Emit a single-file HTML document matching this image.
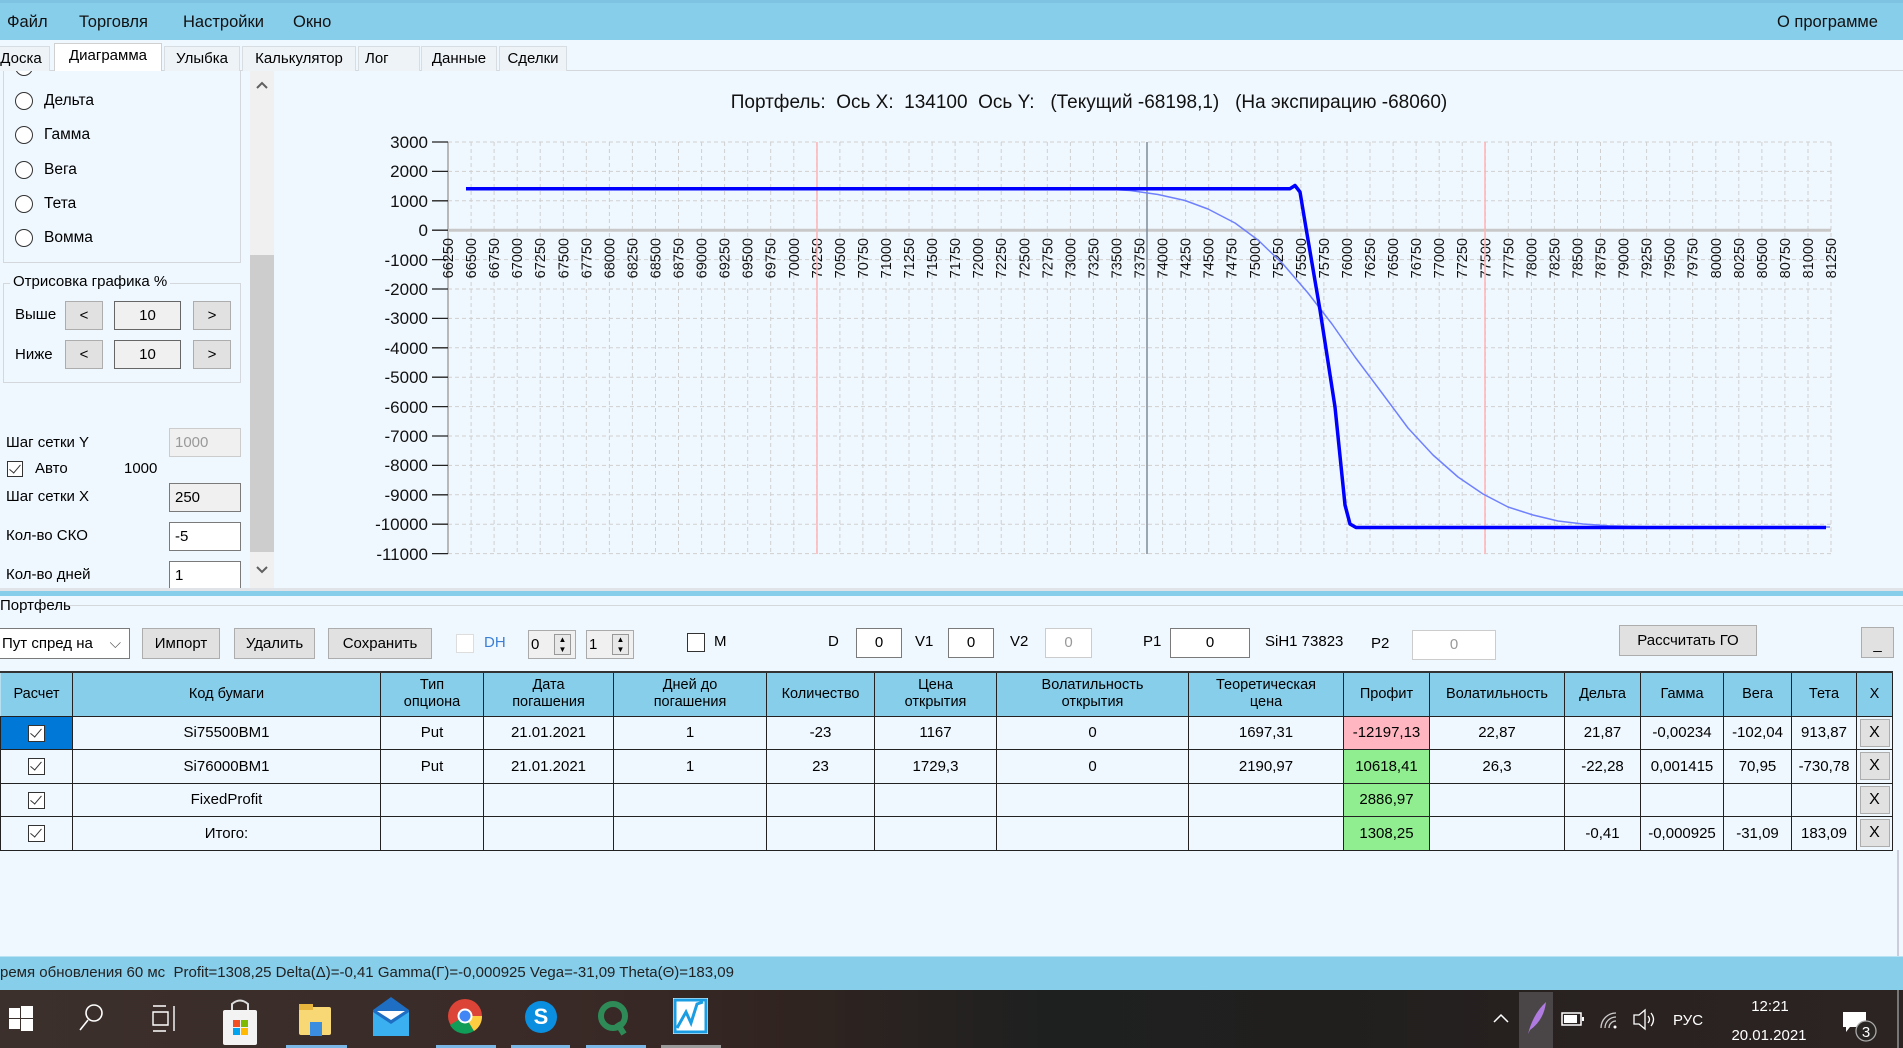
<!DOCTYPE html>
<html><head><meta charset="utf-8">
<style>
*{box-sizing:border-box;margin:0;padding:0}
body{width:1903px;height:1048px;overflow:hidden;background:#f0f8ff;font-family:"Liberation Sans",sans-serif;font-size:15px;color:#000;position:relative}
.a{position:absolute;white-space:nowrap}
.menu{left:0;top:0;width:1903px;height:40px;background:#87ceeb;border-top:3px solid #7ec4e2}
.menu span{position:absolute;top:10px;font-size:16.5px;color:#111}
.tab{position:absolute;top:46px;height:25px;background:#eef3f7;border:1px solid #d8dde2;border-bottom:none;font-size:15px;padding-top:3px;text-align:center}
.btn{position:absolute;background:#e1e1e1;border:1px solid #adadad;text-align:center;font-size:15px}
.tb{position:absolute;background:#fff;border:1px solid #7a7a7a;font-size:15px;padding-left:5px}
.radio{position:absolute;left:15px;width:18px;height:18px;border:1.5px solid #333;border-radius:50%;background:#fff}
.rl{position:absolute;left:44px;font-size:15.5px}
table{position:absolute;left:0;top:671px;border-collapse:collapse;table-layout:fixed;border-top:2px solid #333}
td{border:1px solid #222;height:33.5px;text-align:center;font-size:15px;background:#f0f8ff;padding:0;overflow:hidden;white-space:nowrap}
th{background:#87ceeb;font-weight:normal;font-size:14.5px;height:44px;border:1px solid #222;border-top:none;border-left:1px solid #b6dff0;line-height:17px;padding:0}
.cb{display:inline-block;width:17px;height:17px;border:1px solid #333;background:#fff;position:relative;vertical-align:middle}
.cb:after{content:"";position:absolute;left:4px;top:0px;width:5px;height:10px;border:solid #333;border-width:0 1.5px 1.5px 0;transform:rotate(40deg)}
.xb{display:inline-block;width:30px;height:28px;background:#e1e1e1;border:1px solid #adadad;line-height:26px;font-size:16px}
</style></head><body>

<div class="a menu">
<span style="left:7px">Файл</span><span style="left:79px">Торговля</span><span style="left:183px">Настройки</span><span style="left:293px">Окно</span><span style="left:1777px">О программе</span>
</div>

<div class="a" style="left:0;top:70px;width:1903px;height:1px;background:#d4d8dc"></div>

<div class="a" style="left:3px;top:70px;width:238px;height:193px;border:1px solid #d4d8dc;border-top:none"></div>
<div class="radio" style="top:58px"></div>
<div class="radio" style="top:92px"></div><div class="rl" style="top:92px">Дельта</div>
<div class="radio" style="top:126px"></div><div class="rl" style="top:126px">Гамма</div>
<div class="radio" style="top:161px"></div><div class="rl" style="top:161px">Вега</div>
<div class="radio" style="top:195px"></div><div class="rl" style="top:195px">Тета</div>
<div class="radio" style="top:229px"></div><div class="rl" style="top:229px">Вомма</div>
<div class="a" style="left:0;top:40px;width:277px;height:30px;background:#f0f8ff"></div>
<div class="tab" style="left:-8px;width:58px">Доска</div>
<div class="tab" style="left:54px;width:108px;top:43px;height:28px;background:#fff;border-color:#d0d0d0">Диаграмма</div>
<div class="tab" style="left:164px;width:76px">Улыбка</div>
<div class="tab" style="left:242px;width:114px">Калькулятор</div>
<div class="tab" style="left:358px;width:62px;text-align:left;padding-left:6px">Лог</div>
<div class="tab" style="left:421px;width:76px">Данные</div>
<div class="tab" style="left:499px;width:68px">Сделки</div>

<div class="a" style="left:3px;top:283px;width:238px;height:100px;border:1px solid #d4d8dc"></div>
<div class="a" style="left:10px;top:273px;background:#f0f8ff;padding:0 3px;font-size:15px">Отрисовка графика %</div>
<div class="a" style="left:15px;top:306px">Выше</div>
<div class="btn" style="left:65px;top:301px;width:38px;height:29px;line-height:27px">&lt;</div>
<div class="btn" style="left:114px;top:301px;width:67px;height:29px;line-height:27px;border-color:#666;background:#f0f0f0">10</div>
<div class="btn" style="left:193px;top:301px;width:38px;height:29px;line-height:27px">&gt;</div>
<div class="a" style="left:15px;top:346px">Ниже</div>
<div class="btn" style="left:65px;top:340px;width:38px;height:29px;line-height:27px">&lt;</div>
<div class="btn" style="left:114px;top:340px;width:67px;height:29px;line-height:27px;border-color:#666;background:#f0f0f0">10</div>
<div class="btn" style="left:193px;top:340px;width:38px;height:29px;line-height:27px">&gt;</div>

<div class="a" style="left:6px;top:434px">Шаг сетки Y</div>
<div class="tb" style="left:169px;top:428px;width:72px;height:29px;line-height:27px;background:#f0f0f0;border-color:#ccc;color:#999">1000</div>
<div class="a" style="left:7px;top:460px"><span class="cb" style="width:16px;height:16px"></span></div>
<div class="a" style="left:35px;top:460px">Авто</div>
<div class="a" style="left:124px;top:460px">1000</div>
<div class="a" style="left:6px;top:488px">Шаг сетки X</div>
<div class="tb" style="left:169px;top:483px;width:72px;height:29px;line-height:27px;background:#f0f0f0">250</div>
<div class="a" style="left:6px;top:527px">Кол-во СКО</div>
<div class="tb" style="left:169px;top:522px;width:72px;height:29px;line-height:27px">-5</div>
<div class="a" style="left:6px;top:566px;height:20px;overflow:hidden">Кол-во дней</div>
<div class="tb" style="left:169px;top:561px;width:72px;height:27px;line-height:27px;border-bottom:none">1</div>
<div class="a" style="left:250px;top:71px;width:24px;height:517px;background:#f0f0f0"></div>
<div class="a" style="left:250px;top:255px;width:24px;height:297px;background:#cdcdcd"></div>
<svg class="a" style="left:250px;top:71px" width="24" height="517"><path d="M7 17 L12 12 L17 17" fill="none" stroke="#606060" stroke-width="2"/><path d="M7 496 L12 501 L17 496" fill="none" stroke="#606060" stroke-width="2"/></svg>

<svg class="a" style="left:0;top:0" width="1903" height="600" font-family="Liberation Sans, sans-serif">
<text x="1089" y="108" font-size="19" text-anchor="middle" fill="#111" xml:space="preserve" style="white-space:pre">Портфель:  Ось X:  134100  Ось Y:   (Текущий -68198,1)   (На экспирацию -68060)</text>
<path stroke="#cfcfcf" stroke-width="1" stroke-dasharray="4,3" fill="none" d="M448 142V554M471.1 142V554M494.1 142V554M517.2 142V554M540.2 142V554M563.3 142V554M586.3 142V554M609.4 142V554M632.4 142V554M655.5 142V554M678.5 142V554M701.6 142V554M724.6 142V554M747.7 142V554M770.7 142V554M793.8 142V554M816.8 142V554M839.9 142V554M862.9 142V554M886 142V554M909 142V554M932.1 142V554M955.1 142V554M978.2 142V554M1001.2 142V554M1024.3 142V554M1047.3 142V554M1070.4 142V554M1093.4 142V554M1116.5 142V554M1139.5 142V554M1162.6 142V554M1185.6 142V554M1208.7 142V554M1231.7 142V554M1254.8 142V554M1277.8 142V554M1300.9 142V554M1323.9 142V554M1347 142V554M1370 142V554M1393.1 142V554M1416.1 142V554M1439.2 142V554M1462.2 142V554M1485.3 142V554M1508.3 142V554M1531.4 142V554M1554.4 142V554M1577.5 142V554M1600.5 142V554M1623.6 142V554M1646.6 142V554M1669.7 142V554M1692.7 142V554M1715.8 142V554M1738.8 142V554M1761.9 142V554M1784.9 142V554M1808 142V554M1831 142V554
M448 142H1831M448 171.4H1831M448 200.8H1831M448 259.6H1831M448 289H1831M448 318.4H1831M448 347.8H1831M448 377.2H1831M448 406.6H1831M448 436H1831M448 465.4H1831M448 494.8H1831M448 524.2H1831M448 553.6H1831"/>
<line x1="448" y1="142" x2="448" y2="554" stroke="#b8b8b8" stroke-width="2"/>
<line x1="448" y1="230.2" x2="1831" y2="230.2" stroke="#c8c8c8" stroke-width="3"/>
<path stroke="#222" stroke-width="1.3" d="M432 142H448M432 171.4H448M432 200.8H448M432 230.2H448M432 259.6H448M432 289H448M432 318.4H448M432 347.8H448M432 377.2H448M432 406.6H448M432 436H448M432 465.4H448M432 494.8H448M432 524.2H448M432 553.6H448"/>
<g font-size="17" text-anchor="end" fill="#111">
<text x="428" y="148">3000</text><text x="428" y="177">2000</text><text x="428" y="207">1000</text><text x="428" y="236">0</text><text x="428" y="266">-1000</text><text x="428" y="295">-2000</text><text x="428" y="324">-3000</text><text x="428" y="354">-4000</text><text x="428" y="383">-5000</text><text x="428" y="413">-6000</text><text x="428" y="442">-7000</text><text x="428" y="471">-8000</text><text x="428" y="501">-9000</text><text x="428" y="530">-10000</text><text x="428" y="560">-11000</text>
</g>
<g font-size="14.5" text-anchor="end" fill="#111">
<text transform="translate(453,238) rotate(-90)">66250</text><text transform="translate(476.1,238) rotate(-90)">66500</text><text transform="translate(499.1,238) rotate(-90)">66750</text><text transform="translate(522.2,238) rotate(-90)">67000</text><text transform="translate(545.2,238) rotate(-90)">67250</text><text transform="translate(568.3,238) rotate(-90)">67500</text><text transform="translate(591.3,238) rotate(-90)">67750</text><text transform="translate(614.4,238) rotate(-90)">68000</text><text transform="translate(637.4,238) rotate(-90)">68250</text><text transform="translate(660.5,238) rotate(-90)">68500</text><text transform="translate(683.5,238) rotate(-90)">68750</text><text transform="translate(706.6,238) rotate(-90)">69000</text><text transform="translate(729.6,238) rotate(-90)">69250</text><text transform="translate(752.7,238) rotate(-90)">69500</text><text transform="translate(775.7,238) rotate(-90)">69750</text><text transform="translate(798.8,238) rotate(-90)">70000</text><text transform="translate(821.8,238) rotate(-90)">70250</text><text transform="translate(844.9,238) rotate(-90)">70500</text><text transform="translate(867.9,238) rotate(-90)">70750</text><text transform="translate(891,238) rotate(-90)">71000</text><text transform="translate(914,238) rotate(-90)">71250</text><text transform="translate(937.1,238) rotate(-90)">71500</text><text transform="translate(960.1,238) rotate(-90)">71750</text><text transform="translate(983.2,238) rotate(-90)">72000</text><text transform="translate(1006.2,238) rotate(-90)">72250</text><text transform="translate(1029.3,238) rotate(-90)">72500</text><text transform="translate(1052.3,238) rotate(-90)">72750</text><text transform="translate(1075.4,238) rotate(-90)">73000</text><text transform="translate(1098.4,238) rotate(-90)">73250</text><text transform="translate(1121.5,238) rotate(-90)">73500</text><text transform="translate(1144.5,238) rotate(-90)">73750</text><text transform="translate(1167.6,238) rotate(-90)">74000</text><text transform="translate(1190.6,238) rotate(-90)">74250</text><text transform="translate(1213.7,238) rotate(-90)">74500</text><text transform="translate(1236.7,238) rotate(-90)">74750</text><text transform="translate(1259.8,238) rotate(-90)">75000</text><text transform="translate(1282.8,238) rotate(-90)">75250</text><text transform="translate(1305.9,238) rotate(-90)">75500</text><text transform="translate(1328.9,238) rotate(-90)">75750</text><text transform="translate(1352,238) rotate(-90)">76000</text><text transform="translate(1375,238) rotate(-90)">76250</text><text transform="translate(1398.1,238) rotate(-90)">76500</text><text transform="translate(1421.1,238) rotate(-90)">76750</text><text transform="translate(1444.2,238) rotate(-90)">77000</text><text transform="translate(1467.2,238) rotate(-90)">77250</text><text transform="translate(1490.3,238) rotate(-90)">77500</text><text transform="translate(1513.3,238) rotate(-90)">77750</text><text transform="translate(1536.4,238) rotate(-90)">78000</text><text transform="translate(1559.4,238) rotate(-90)">78250</text><text transform="translate(1582.5,238) rotate(-90)">78500</text><text transform="translate(1605.5,238) rotate(-90)">78750</text><text transform="translate(1628.6,238) rotate(-90)">79000</text><text transform="translate(1651.6,238) rotate(-90)">79250</text><text transform="translate(1674.7,238) rotate(-90)">79500</text><text transform="translate(1697.7,238) rotate(-90)">79750</text><text transform="translate(1720.8,238) rotate(-90)">80000</text><text transform="translate(1743.8,238) rotate(-90)">80250</text><text transform="translate(1766.9,238) rotate(-90)">80500</text><text transform="translate(1789.9,238) rotate(-90)">80750</text><text transform="translate(1813,238) rotate(-90)">81000</text><text transform="translate(1836,238) rotate(-90)">81250</text>
</g>
<line x1="817" y1="142" x2="817" y2="554" stroke="#ffb3b3" stroke-width="1.5"/>
<line x1="1485" y1="142" x2="1485" y2="554" stroke="#ffb3b3" stroke-width="1.5"/>
<line x1="1147" y1="142" x2="1147" y2="554" stroke="#7d8c9a" stroke-width="1.5"/>
<polyline fill="none" stroke="#6f80ff" stroke-width="1.5" stroke-linejoin="round" points="1100,188.8 1130,190.5 1158,194.5 1185,200.5 1208,209 1235,223 1258,240 1283,264 1308,293 1332,324 1355,357 1382,393 1408,428 1433,455 1458,477 1483,494 1508,507 1533,515 1558,521 1583,524 1608,525.8 1658,527 1830,527"/>
<path fill="none" stroke="#0000ff" stroke-width="3.5" stroke-linejoin="round" d="M466 188.7H1290L1295 185.5L1300 192L1306 228L1320 310L1335 407L1345 505L1350 524L1356 527.5H1826"/>
</svg>

<div class="a" style="left:0;top:588px;width:1903px;height:3px;background:#e0e4e8"></div>
<div class="a" style="left:0;top:591px;width:1903px;height:5px;background:#87ceeb"></div>
<div class="a" style="left:40px;top:605px;width:1863px;height:1px;background:#d4d8dc"></div>
<div class="a" style="left:0;top:597px;font-size:15px">Портфель</div>

<div class="tb" style="left:-4px;top:628px;width:134px;height:31px;line-height:29px">Пут спред на<span style="position:absolute;right:8px;top:0;color:#555">⌵</span></div>
<div class="btn" style="left:142px;top:628px;width:78px;height:31px;line-height:29px">Импорт</div>
<div class="btn" style="left:234px;top:628px;width:81px;height:31px;line-height:29px">Удалить</div>
<div class="btn" style="left:328px;top:628px;width:104px;height:31px;line-height:29px">Сохранить</div>
<div class="a" style="left:456px;top:634px;width:18px;height:19px;background:#fff;border:1px solid #ddd"></div>
<div class="a" style="left:484px;top:634px;color:#3b7fd4;font-size:15px">DH</div>
<div class="tb" style="left:528px;top:630px;width:48px;height:29px;line-height:27px;padding-left:2px;background:#f0f0f0;border-color:#aaa">0<span style="position:absolute;left:25px;top:3px;width:17px;height:21px;border:1px solid #999;background:#e8e8e8;font-size:8px;line-height:10px;text-align:center">▲<br>▼</span></div>
<div class="tb" style="left:586px;top:630px;width:48px;height:29px;line-height:27px;padding-left:2px;background:#f0f0f0;border-color:#aaa">1<span style="position:absolute;left:25px;top:3px;width:17px;height:21px;border:1px solid #999;background:#e8e8e8;font-size:8px;line-height:10px;text-align:center">▲<br>▼</span></div>
<div class="a" style="left:687px;top:633px;width:18px;height:19px;background:#fff;border:1.5px solid #333"></div>
<div class="a" style="left:714px;top:633px;font-size:15px">M</div>
<div class="a" style="left:828px;top:633px;font-size:15px">D</div>
<div class="tb" style="left:856px;top:628px;width:46px;height:30px;line-height:28px;text-align:center;padding:0">0</div>
<div class="a" style="left:915px;top:633px;font-size:15px">V1</div>
<div class="tb" style="left:948px;top:628px;width:46px;height:30px;line-height:28px;text-align:center;padding:0">0</div>
<div class="a" style="left:1010px;top:633px;font-size:15px">V2</div>
<div class="tb" style="left:1045px;top:628px;width:47px;height:30px;line-height:28px;text-align:center;padding:0;border-color:#ccc;color:#999">0</div>
<div class="a" style="left:1143px;top:633px;font-size:15px">P1</div>
<div class="tb" style="left:1170px;top:628px;width:80px;height:30px;line-height:28px;text-align:center;padding:0">0</div>
<div class="a" style="left:1265px;top:633px;font-size:15px">SiH1 73823</div>
<div class="a" style="left:1371px;top:635px;font-size:15px">P2</div>
<div class="tb" style="left:1412px;top:630px;width:84px;height:30px;line-height:28px;text-align:center;padding:0;border-color:#ccc;color:#999">0</div>
<div class="btn" style="left:1619px;top:625px;width:138px;height:31px;line-height:29px">Рассчитать ГО</div>
<div class="btn" style="left:1861px;top:627px;width:33px;height:31px;line-height:34px">_</div>

<table>
<colgroup><col style="width:72px"><col style="width:308px"><col style="width:103px"><col style="width:130px"><col style="width:153px"><col style="width:108px"><col style="width:122px"><col style="width:192px"><col style="width:155px"><col style="width:86px"><col style="width:135px"><col style="width:76px"><col style="width:83px"><col style="width:68px"><col style="width:65px"><col style="width:36px"></colgroup>
<tr><th>Расчет</th><th>Код бумаги</th><th>Тип<br>опциона</th><th>Дата<br>погашения</th><th>Дней до<br>погашения</th><th>Количество</th><th>Цена<br>открытия</th><th>Волатильность<br>открытия</th><th>Теоретическая<br>цена</th><th>Профит</th><th>Волатильность</th><th>Дельта</th><th>Гамма</th><th>Вега</th><th>Тета</th><th>X</th></tr>
<tr><td style="background:#0078d7"><span class="cb"></span></td><td>Si75500BM1</td><td>Put</td><td>21.01.2021</td><td>1</td><td>-23</td><td>1167</td><td>0</td><td>1697,31</td><td style="background:#ffb6c1">-12197,13</td><td>22,87</td><td>21,87</td><td>-0,00234</td><td>-102,04</td><td>913,87</td><td><span class="xb">X</span></td></tr>
<tr><td><span class="cb"></span></td><td>Si76000BM1</td><td>Put</td><td>21.01.2021</td><td>1</td><td>23</td><td>1729,3</td><td>0</td><td>2190,97</td><td style="background:#90ee90">10618,41</td><td>26,3</td><td>-22,28</td><td>0,001415</td><td>70,95</td><td>-730,78</td><td><span class="xb">X</span></td></tr>
<tr><td><span class="cb"></span></td><td>FixedProfit</td><td></td><td></td><td></td><td></td><td></td><td></td><td></td><td style="background:#90ee90">2886,97</td><td></td><td></td><td></td><td></td><td></td><td><span class="xb">X</span></td></tr>
<tr><td><span class="cb"></span></td><td>Итого:</td><td></td><td></td><td></td><td></td><td></td><td></td><td></td><td style="background:#90ee90">1308,25</td><td></td><td>-0,41</td><td>-0,000925</td><td>-31,09</td><td>183,09</td><td><span class="xb">X</span></td></tr>
</table>
<div class="a" style="left:1897px;top:850px;width:2px;height:107px;background:#ccd"></div>

<div class="a" style="left:0;top:956px;width:1903px;height:35px;background:#87ceeb;border-top:1px solid #b9e3f3"></div>
<div class="a" style="left:0;top:964px;font-size:15px;color:#222">ремя обновления 60 мс&nbsp; Profit=1308,25 Delta(Δ)=-0,41 Gamma(Γ)=-0,000925 Vega=-31,09 Theta(Θ)=183,09</div>

<div class="a" style="left:0;top:990px;width:1903px;height:58px;background:linear-gradient(90deg,#3b302c 0%,#3a2a27 30%,#302420 42%,#1e2020 55%,#201f1e 70%,#2a2220 85%,#2c2422 100%)"></div>
<svg class="a" style="left:0;top:990px" width="1903" height="58">
<g fill="#fff"><rect x="9" y="18" width="11" height="10"/><rect x="21" y="16" width="12" height="12"/><rect x="9" y="29" width="11" height="10"/><rect x="21" y="29" width="12" height="12"/></g>
<circle cx="94" cy="23" r="8" fill="none" stroke="#fff" stroke-width="1.6"/><line x1="88" y1="30" x2="80" y2="40" stroke="#fff" stroke-width="1.6"/>
<g fill="none" stroke="#fff" stroke-width="1.4"><path d="M153 16H166M153 41H166M153 22H168V35H153Z"/><line x1="174" y1="16" x2="174" y2="41"/></g>
<rect x="223" y="20" width="34" height="35" rx="2" fill="#f3f3f3"/><path d="M232 20V14Q240 7 248 14V20" fill="none" stroke="#ddd" stroke-width="2"/><rect x="233" y="30" width="7" height="7" fill="#f25022"/><rect x="241" y="30" width="7" height="7" fill="#7fba00"/><rect x="233" y="38" width="7" height="7" fill="#00a4ef"/><rect x="241" y="38" width="7" height="7" fill="#ffb900"/>
<rect x="299" y="17" width="32" height="28" rx="2" fill="#f8d775"/><rect x="299" y="14" width="14" height="6" fill="#e8b63c"/><rect x="310" y="32" width="12" height="14" fill="#3b8de0"/>
<path d="M373 20L391 7L409 20V46H373Z" fill="#1e6fc4"/><path d="M373 22L391 34L409 22V46H373Z" fill="#3ab0f0"/><path d="M377 21L391 30L405 21" fill="#fff"/>
<circle cx="465" cy="26" r="17" fill="#db4437"/><path d="M465 26L450 35A17 17 0 0 0 474 41Z" fill="#0f9d58"/><path d="M465 26L482 26A17 17 0 0 1 474 41Z" fill="#ffcd40"/><circle cx="465" cy="26" r="7.5" fill="#fff"/><circle cx="465" cy="26" r="5.5" fill="#4285f4"/>
<circle cx="541" cy="27" r="16" fill="#0a8fe0"/><text x="541" y="34" font-size="22" font-weight="bold" fill="#fff" text-anchor="middle" font-family="Liberation Sans">S</text>
<circle cx="613" cy="26" r="12" fill="none" stroke="#2e8b57" stroke-width="6"/><line x1="617" y1="33" x2="624" y2="44" stroke="#2e8b57" stroke-width="6"/>
<rect x="673" y="8" width="35" height="36" fill="#fff"/><rect x="675" y="10" width="31" height="32" fill="none" stroke="#1a9de2" stroke-width="3"/><polyline points="677,38 686,22 691,33 697,14 703,12" fill="none" stroke="#1a9de2" stroke-width="3"/>
<g fill="#7ab7e6"><rect x="286" y="55" width="61" height="3"/><rect x="436" y="55" width="60" height="3"/><rect x="511" y="55" width="59" height="3"/><rect x="586" y="55" width="60" height="3"/></g><rect x="661" y="55" width="60" height="3" fill="#9a9a9a"/>
<path d="M1494 32L1501 25L1508 32" fill="none" stroke="#fff" stroke-width="1.5"/>
<rect x="1519" y="2" width="34" height="56" fill="#4a4648"/><path d="M1528 44Q1533 24 1546 12Q1544 30 1530 40Z" fill="#b07be0"/>
<rect x="1562" y="23" width="19" height="12" fill="none" stroke="#fff" stroke-width="1.5"/><rect x="1564" y="25" width="13" height="8" fill="#fff"/><rect x="1582" y="27" width="2" height="4" fill="#fff"/>
<g fill="none" stroke="#ccc" stroke-width="1.3"><path d="M1601 38A15 15 0 0 1 1616 23M1605 38A11 11 0 0 1 1616 27M1609 38A7 7 0 0 1 1616 31"/></g><circle cx="1615" cy="37" r="1.5" fill="#fff"/>
<path d="M1634 25H1639L1645 20V39L1639 34H1634Z" fill="none" stroke="#fff" stroke-width="1.3"/><path d="M1648 26Q1651 29.5 1648 33M1651 23Q1656 29.5 1651 36" fill="none" stroke="#fff" stroke-width="1.3"/>
<g fill="#fff" font-family="Liberation Sans" font-size="15"><text x="1673" y="35">РУС</text><text x="1770" y="21" text-anchor="middle">12:21</text><text x="1769" y="50" text-anchor="middle">20.01.2021</text></g>
<path d="M1843 22H1866V37H1850L1846 42V37H1843Z" fill="#fff"/><circle cx="1866" cy="41" r="10" fill="#2a2624" stroke="#aaa" stroke-width="1.3"/><text x="1866" y="47" font-size="15" fill="#fff" text-anchor="middle" font-family="Liberation Sans">3</text>
<rect x="1897" y="0" width="2" height="58" fill="#777"/>
</svg>
</body></html>
